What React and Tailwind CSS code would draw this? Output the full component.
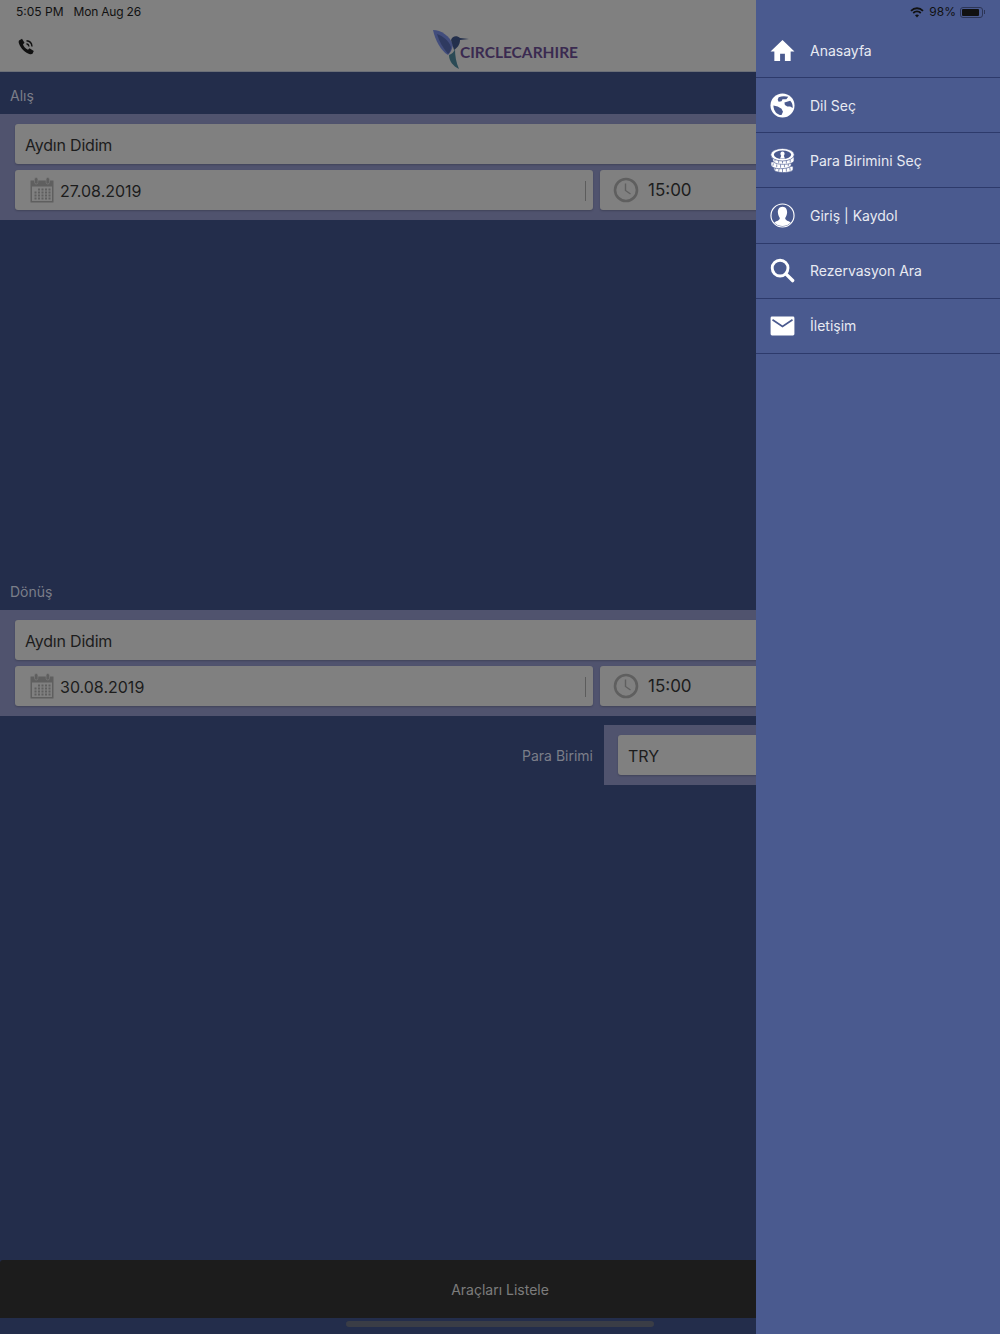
const menuItems = [
  { label: 'Anasayfa', icon: HomeIcon },
  { label: 'Dil Seç', icon: GlobeIcon },
  { label: 'Para Birimini Seç', icon: CoinsIcon },
  { label: 'Giriş | Kaydol', icon: UserIcon },
  { label: 'Rezervasyon Ara', icon: SearchIcon },
  { label: 'İletişim', icon: MailIcon },
];

function PhoneIcon() {
  return (
    <svg width="17" height="17" viewBox="0 0 17 17" fill="none">
      <path d="M1 2.5 L4 0.8 L6.5 4.8 L5 6.3 C5.5 8.5 7.5 10.8 10 11.8 L11.5 10.3 L15.8 13 L14.5 15.8 C13.5 16.6 11.5 16.4 9 15 C5 12.8 1.8 8.5 0.8 5 C0.5 4 0.6 3.2 1 2.5 Z" fill="#111" />
      <path d="M8.5 5.8 C9.8 6 10.8 7 11 8.5" stroke="#111" strokeWidth="1.4" />
      <path d="M8.5 2.8 C11.5 3 13.8 5.3 14 8.5" stroke="#111" strokeWidth="1.4" />
    </svg>
  );
}

function HomeIcon() {
  return (
    <svg width="25" height="23" viewBox="0 0 26 24" fill="white">
      <path d="M13 1 L25.5 13 L21.5 13 L21.5 23 L15.5 23 L15.5 15.5 L10.5 15.5 L10.5 23 L4.5 23 L4.5 13 L0.5 13 Z" />
    </svg>
  );
}

function GlobeIcon() {
  return (
    <svg width="25" height="25" viewBox="0 0 26 26">
      <circle cx="13" cy="13" r="12.5" fill="white" />
      <path d="M9 4.5 C12 3 16 3 19 4 L17 6.5 L13 6.5 L12 8.5 L9 9 L8 7 Z" fill="#4a5a8f" />
      <path d="M15 10 L21 8 C23 10 23.8 12.5 23.6 15.5 L21 14 L18 14 L15.5 12.5 Z" fill="#4a5a8f" />
      <path d="M3.5 13 L8 14 L12 16.5 L13.5 19.5 L12 23 C7 22.8 4 19 3.5 13 Z" fill="#4a5a8f" />
    </svg>
  );
}

function CoinsIcon() {
  return (
    <svg width="25" height="25" viewBox="0 0 26 26" fill="white" stroke="#4a5a8f" strokeWidth="0.7">
      <path d="M4 19 V22 C4 24 8 25.5 14 25.5 C20 25.5 24 24 24 22 V19 Z" />
      <path d="M5 23 L6 20 M9 24.5 L9.5 21 M13 25 L13 21 M17 24.5 L17 21 M21 23.5 L20.5 20" />
      <path d="M1 14.5 V17.5 C1 20 5 21.5 11 21.5 C17 21.5 22 20 22 17.5 V14.5 Z" />
      <path d="M3 18.5 L3.5 16 M7 20 L7 17 M11 20.5 L11 17 M15 20 L15 17 M19 19 L19 16" />
      <path d="M3 9.5 V13 C3 15.5 8 17 14 17 C20 17 25 15.5 25 13 V9.5 Z" />
      <path d="M5 14 L5.5 11 M9 15.5 L9 12 M13 16 L13 12 M17 16 L17 12 M21 15 L21 12" />
      <ellipse cx="13" cy="7" rx="12.2" ry="6.5" />
      <ellipse cx="13" cy="7" rx="9" ry="4.3" fill="#4a5a8f" stroke="none" />
      <ellipse cx="13" cy="6" rx="2.2" ry="2.4" stroke="none" />
      <path d="M12 7 L14 7 L15.5 11 L10.5 11 Z" stroke="none" />
    </svg>
  );
}

function UserIcon() {
  return (
    <svg width="25" height="25" viewBox="0 0 26 26">
      <circle cx="13" cy="13" r="12" fill="none" stroke="white" strokeWidth="1.2" />
      <path d="M13 4 C16.5 4 18 7 17.8 10 C17.6 12.5 16.6 14.5 15.8 15.5 C15.6 17 17 18 19.5 19 L21.5 20.3 C19.5 22.8 16.5 24 13 24 C9.5 24 6.5 22.8 4.5 20.3 L6.5 19 C9 18 10.4 17 10.2 15.5 C9.4 14.5 8.4 12.5 8.2 10 C8 7 9.5 4 13 4 Z" fill="white" />
    </svg>
  );
}

function SearchIcon() {
  return (
    <svg width="25" height="25" viewBox="0 0 26 26" fill="none" stroke="white">
      <circle cx="10.5" cy="10.5" r="8.2" strokeWidth="3" />
      <path d="M16.5 16.5 L23.5 23.5" strokeWidth="3.6" strokeLinecap="round" />
    </svg>
  );
}

function MailIcon() {
  return (
    <svg width="25" height="20" viewBox="0 0 26 21">
      <rect x="0.5" y="0.5" width="25" height="20" rx="1.5" fill="white" />
      <path d="M2.5 4 L13 11 L23.5 4" fill="none" stroke="#4a5a8f" strokeWidth="1.8" />
    </svg>
  );
}

function CalendarIcon() {
  return (
    <svg width="24" height="26" viewBox="0 0 24 26" fill="#5f5f5f">
      <path d="M0.5 3.5 H23.5 V25.5 H0.5 Z M2 9.5 V24 H22 V9.5 Z" fillRule="evenodd" />
      <rect x="4.5" y="0.5" width="3.4" height="6.5" rx="1.7" stroke="#808080" strokeWidth="0.6" />
      <rect x="16.1" y="0.5" width="3.4" height="6.5" rx="1.7" stroke="#808080" strokeWidth="0.6" />
      {[11.5, 14.5, 17.5, 20.5].map((y) =>
        [4.5, 8, 11.5, 15, 18.5].map((x) =>
          y === 11.5 && x < 8 ? null : <rect key={`${x}-${y}`} x={x} y={y} width="2" height="2" />
        )
      )}
    </svg>
  );
}

function ClockIcon() {
  return (
    <svg width="26" height="26" viewBox="0 0 26 26" fill="none" stroke="#5f5f5f">
      <circle cx="13" cy="13" r="11" strokeWidth="2.6" />
      <path d="M12.5 6.5 V13.5 L17.5 17" strokeWidth="1.4" />
    </svg>
  );
}

function Logo() {
  return (
    <div className="flex items-start ml-[10px]">
      <svg width="38" height="41" viewBox="0 0 38 41">
        <path d="M1 2 C9 2 18 8 21 17 C20 22 18 25 16 27 C9 23 3 12 1 2 Z" fill="#424d7c" />
        <path d="M5 6 C11 8 17 13 19 19 C19 22 18 24 16 26 C11 20 7 13 5 6 Z" fill="#2f3a60" />
        <path d="M19 12 C20 8 25 7 28 10 L37 11 L28 12 C28 17 25 20 22 22 Z" fill="#232f4c" />
        <path d="M17 27 C20 26 22 24 23 21 C23 28 24 34 27 41 C21 38 17 33 17 27 Z" fill="#2b4a55" />
      </svg>
      <span className="font-['Lato',sans-serif] font-bold text-[15.5px] leading-[20px] text-[#3a2a50] ml-[-10px] mt-[14px]">CIRCLECARHIRE</span>
    </div>
  );
}

function FieldBox({ className, children }) {
  return (
    <div className={`h-10 rounded-[3px] bg-[#808080] flex items-center text-[#1c1c1c] shadow-[0_1px_2px_rgba(0,0,0,0.2)] ${className}`}>
      {children}
    </div>
  );
}

function LocationBlock({ title, place, date }) {
  return (
    <section>
      <div className="h-[42px] flex items-center pl-[10px] pt-[5px] text-[14px] text-[#7b7e89]">{title}</div>
      <div className="h-[106px] bg-[#50536e] pt-[10px] pl-[15px] pr-[15px] flex flex-col gap-[6px]">
        <FieldBox className="pl-[10px] pt-[1px] text-[16px] tracking-[-0.2px]">{place}</FieldBox>
        <div className="flex gap-[7px]">
          <FieldBox className="w-[578px] pl-[15px] relative">
            <CalendarIcon />
            <span className="ml-[6px] pt-[1px] text-[16px]">{date}</span>
            <div className="absolute right-[7px] top-[11px] h-[20px] w-px bg-[#5c5c5c]" />
          </FieldBox>
          <FieldBox className="flex-1 pl-[13px]">
            <ClockIcon />
            <span className="ml-[9px] pt-[1px] text-[17px]">15:00</span>
          </FieldBox>
        </div>
      </div>
    </section>
  );
}

export default function App() {
  return (
    <div className="relative w-[1000px] h-[1334px] overflow-hidden bg-[#232d4b] font-['Inter',sans-serif]">
      <div className="flex flex-col h-full">
        {/* Header */}
        <header className="h-[72px] bg-[#808080] border-b border-[#6b6f78] relative">
          <div className="absolute left-4 top-[5px] flex gap-[10px] text-[12px] leading-[14px] text-[#111]">
            <span>5:05 PM</span>
            <span className="tracking-[-0.2px]">Mon Aug 26</span>
          </div>
          <div className="absolute left-[18px] top-[38px]">
            <PhoneIcon />
          </div>
          <div className="h-full flex justify-center pt-[28px]">
            <Logo />
          </div>
        </header>

        <LocationBlock title="Alış" place="Aydın Didim" date="27.08.2019" />
        <div className="h-[348px]" />
        <LocationBlock title="Dönüş" place="Aydın Didim" date="30.08.2019" />

        {/* Currency */}
        <div className="flex justify-end items-center mt-[9px]">
          <span className="text-[14px] text-[#7b7e89] mr-[11px]">Para Birimi</span>
          <div className="w-[396px] h-[60px] bg-[#50536e] pl-[14px] pr-[15px] py-[10px]">
            <FieldBox className="pl-[10px] pt-[2px] text-[16px]">TRY</FieldBox>
          </div>
        </div>

        <div className="flex-1" />

        {/* Bottom button */}
        <div className="h-[58px] rounded-t-[3px] bg-[#1c1c1c] flex items-center justify-center text-[14px] text-[#7c7c7c]">
          Araçları Listele
        </div>
        <div className="h-[16px] flex justify-center pt-[3px]">
          <div className="w-[308px] h-[6px] rounded-full bg-[#3a3d46]" />
        </div>
      </div>

      {/* Drawer */}
      <aside className="absolute right-0 top-0 bottom-0 w-[244px] bg-[#4a5a8f]">
        <div className="h-[23px] relative">
          <div className="absolute right-[15px] top-[5px] flex items-center text-[12px] leading-[14px] text-[#111]">
            <svg width="14" height="11" viewBox="0 0 14 11" fill="none" stroke="#111" className="mr-[5px]">
              <path d="M1 3.8 C4.5 0.4 9.5 0.4 13 3.8" strokeWidth="1.8" />
              <path d="M3.2 6 C5.4 4 8.6 4 10.8 6" strokeWidth="1.8" />
              <path d="M7 10.5 L5 8.2 C6 7.4 8 7.4 9 8.2 Z" fill="#111" stroke="none" />
            </svg>
            <span>98%</span>
            <div className="ml-[4px] w-[23px] h-[11px] rounded-[3px] border border-[#2c3556] p-[1px]">
              <div className="h-full w-[92%] rounded-[1px] bg-[#111]" />
            </div>
            <div className="ml-px w-px h-[4px] bg-[#2c3556]" />
          </div>
        </div>
        <nav>
          {menuItems.map(({ label, icon: Icon }) => (
            <div key={label} className="h-[55.2px] first:h-[55px] flex items-center border-b border-[#2d3a6b] text-[14px] text-[#e8eaf2]">
              <div className="w-[54px] pl-[14px] flex justify-start">
                <Icon />
              </div>
              <span>{label}</span>
            </div>
          ))}
        </nav>
      </aside>
    </div>
  );
}
